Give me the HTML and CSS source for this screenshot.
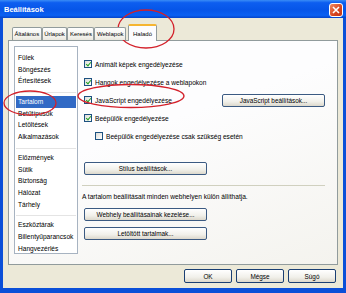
FILE: index.html
```
<!DOCTYPE html>
<html lang="hu">

<head>
    <meta charset="utf-8">
    <title>Beállítások</title>
    <link rel="stylesheet" href="styles.css">
</head>

<body>

    <div class="window">

        <div class="titlebar">
            <span class="title">Beállítások</span>
            <span class="close">
                <svg width="8" height="8" viewBox="0 0 8 8"><path d="M1 1 L7 7 M7 1 L1 7" stroke="#fff" stroke-width="1.6"/></svg>
            </span>
        </div>

        <div class="client">

            <div class="tabs">
                <div class="tab">Általános</div>
                <div class="tab">Űrlapok</div>
                <div class="tab">Keresés</div>
                <div class="tab">Weblapok</div>
                <div class="tab valgt">Haladó</div>
            </div>

            <div class="panel">

                <div class="sections">
                    <div class="group">
                        <div class="item">Fülek</div>
                        <div class="item">Böngészés</div>
                        <div class="item">Értesítések</div>
                    </div>
                    <div class="group">
                        <div class="item valgt">Tartalom</div>
                        <div class="item">Betűtípusok</div>
                        <div class="item">Letöltések</div>
                        <div class="item">Alkalmazások</div>
                    </div>
                    <div class="group">
                        <div class="item">Előzmények</div>
                        <div class="item">Sütik</div>
                        <div class="item">Biztonság</div>
                        <div class="item">Hálózat</div>
                        <div class="item">Tárhely</div>
                    </div>
                    <div class="group">
                        <div class="item">Eszköztárak</div>
                        <div class="item">Billentyűparancsok</div>
                        <div class="item">Hangvezérlés</div>
                    </div>
                </div>

                <div class="content">
                    <div class="checks">
                        <div class="row">
                            <span class="box on"></span>Animált képek engedélyezése
                        </div>
                        <div class="row">
                            <span class="box on"></span>Hangok engedélyezése a weblapokon
                        </div>
                        <div class="row">
                            <span class="box on"></span>JavaScript engedélyezése
                            <button class="btn js">JavaScript beállítások...</button>
                        </div>
                        <div class="row">
                            <span class="box on"></span>Beépülők engedélyezése
                        </div>
                        <div class="row sub">
                            <span class="box"></span>Beépülők engedélyezése csak szükség esetén
                        </div>
                    </div>

                    <button class="btn wide">Stílus beállítások...</button>

                    <hr>

                    <p class="note">A tartalom beállításait minden webhelyen külön állíthatja.</p>

                    <button class="btn wide">Webhely beállításainak kezelése...</button>
                    <button class="btn wide">Letöltött tartalmak...</button>
                </div>

            </div>

            <div class="actions">
                <button class="btn">OK</button>
                <button class="btn">Mégse</button>
                <button class="btn">Súgó</button>
            </div>

        </div>

        <!-- red marks drawn over the screenshot -->
        <svg class="marks" width="346" height="293" viewBox="0 0 346 293">
            <ellipse cx="146" cy="29" rx="28" ry="19" />
            <ellipse cx="30" cy="103" rx="26" ry="12" />
            <ellipse cx="131" cy="96" rx="53" ry="11.5" />
        </svg>

    </div>

</body></html>
```

FILE: styles.css
```
body {
    margin: 0;
    font-family: 'Liberation Sans', Arial, sans-serif;
    font-size: 6.6px;
    color: #000;
}

.window {
    position: relative;
    width: 346px;
    height: 293px;
    box-sizing: border-box;
    display: flex;
    flex-direction: column;
    background-color: #0b4fd8;
    padding: 0 3px 5px;
}

.titlebar {
    height: 18px;
    margin: 0 -3px;
    padding: 0 3px 0 4px;
    display: flex;
    align-items: center;
    justify-content: space-between;
    background: linear-gradient(#3a8cf6 0%, #0d5ef0 15%, #0655e8 55%, #0a60f2 85%, #0444c9 100%);
}

.title {
    color: #fff;
    font-weight: bold;
    font-size: 7.5px;
    margin-top: 1px;
}

.close {
    width: 12px;
    height: 12px;
    margin-top: 2px;
    border: 1px solid #fff;
    border-radius: 3px;
    background: linear-gradient(135deg, #f08a63, #d6441f 60%, #c2361a);
    display: flex;
    align-items: center;
    justify-content: center;
}

.client {
    flex: 1;
    background-color: #ece9d8;
    padding: 6px 5px 0;
    display: flex;
    flex-direction: column;
}

.tabs {
    display: flex;
    align-items: flex-end;
    height: 16px;
    padding-left: 4px;
    position: relative;
    z-index: 1;
}

.tab {
    height: 13px;
    box-sizing: border-box;
    padding: 0 1.5px;
    border: 1px solid #919b9c;
    border-bottom: none;
    border-radius: 2px 2px 0 0;
    background: linear-gradient(#fefefe, #f3f2ec 70%, #e9e7de);
    display: flex;
    align-items: center;
    font-size: 6px;
}

.tab.valgt {
    height: 17px;
    margin: 0 0 -1px 2px;
    padding: 0 4px;
    border-top: 2px solid #f5b532;
    background: #fcfcfe;
}

.panel {
    flex: 0 0 225px;
    box-sizing: border-box;
    border: 1px solid #919b9c;
    background: linear-gradient(160deg, #fdfdfe 40%, #f4f3ee);
    display: flex;
    padding: 5px 0 0 5px;
}

.sections {
    width: 64px;
    height: 208px;
    box-sizing: border-box;
    border: 1px solid #a7b3c1;
    background-color: #fff;
    padding: 5px 1px 0;
}

.group {
    border-bottom: 1px solid #e4e4e4;
    padding-bottom: 5px;
    margin-bottom: 3px;
}

.group:last-child {
    border-bottom: none;
}

.item {
    height: 11.7px;
    line-height: 11.7px;
    padding-left: 2px;
    white-space: nowrap;
}

.item.valgt {
    background-color: #316ac5;
    color: #fff;
}

.content {
    flex: 1;
    padding: 12px 12px 0 6px;
    display: flex;
    flex-direction: column;
    align-items: flex-start;
}

.checks {
    align-self: stretch;
    display: flex;
    flex-direction: column;
    gap: 6px;
}

.row {
    height: 12px;
    display: flex;
    align-items: center;
    white-space: nowrap;
}

.row.sub {
    padding-left: 11px;
}

.box {
    width: 8px;
    height: 8px;
    box-sizing: border-box;
    border: 1px solid #1c5180;
    background: linear-gradient(135deg, #dcdcd7, #fff);
    margin-right: 3px;
    position: relative;
}

.box.on::after {
    content: "";
    position: absolute;
    left: 1.5px;
    top: 0;
    width: 2px;
    height: 4px;
    border: solid #21a121;
    border-width: 0 1.5px 1.5px 0;
    transform: rotate(40deg);
}

.btn {
    font-family: inherit;
    font-size: 6.4px;
    height: 13px;
    padding: 0;
    border: 1px solid #3b5a82;
    border-radius: 2px;
    background: linear-gradient(#fff, #f1f0ea 60%, #dcd8cc);
    color: #000;
}

.btn.js {
    width: 103px;
    margin-left: auto;
}

.btn.wide {
    width: 123px;
}

.checks + .btn {
    margin-top: 20px;
}

hr {
    align-self: stretch;
    border: none;
    border-top: 1px solid #d0d0bf;
    margin: 10px 0 0 -2px;
}

.note {
    margin: 7px 0 8px -2px;
}

.note + .btn {
    margin-bottom: 6px;
}

.actions {
    display: flex;
    justify-content: flex-end;
    gap: 4px;
    padding: 4px 2px 0 0;
}

.actions .btn {
    width: 48px;
    height: 14px;
    border-color: #1a3f73;
}

.marks {
    position: absolute;
    left: 0;
    top: 0;
    pointer-events: none;
}

.marks ellipse {
    fill: none;
    stroke: #d3202a;
    stroke-width: 1.3;
}
```
